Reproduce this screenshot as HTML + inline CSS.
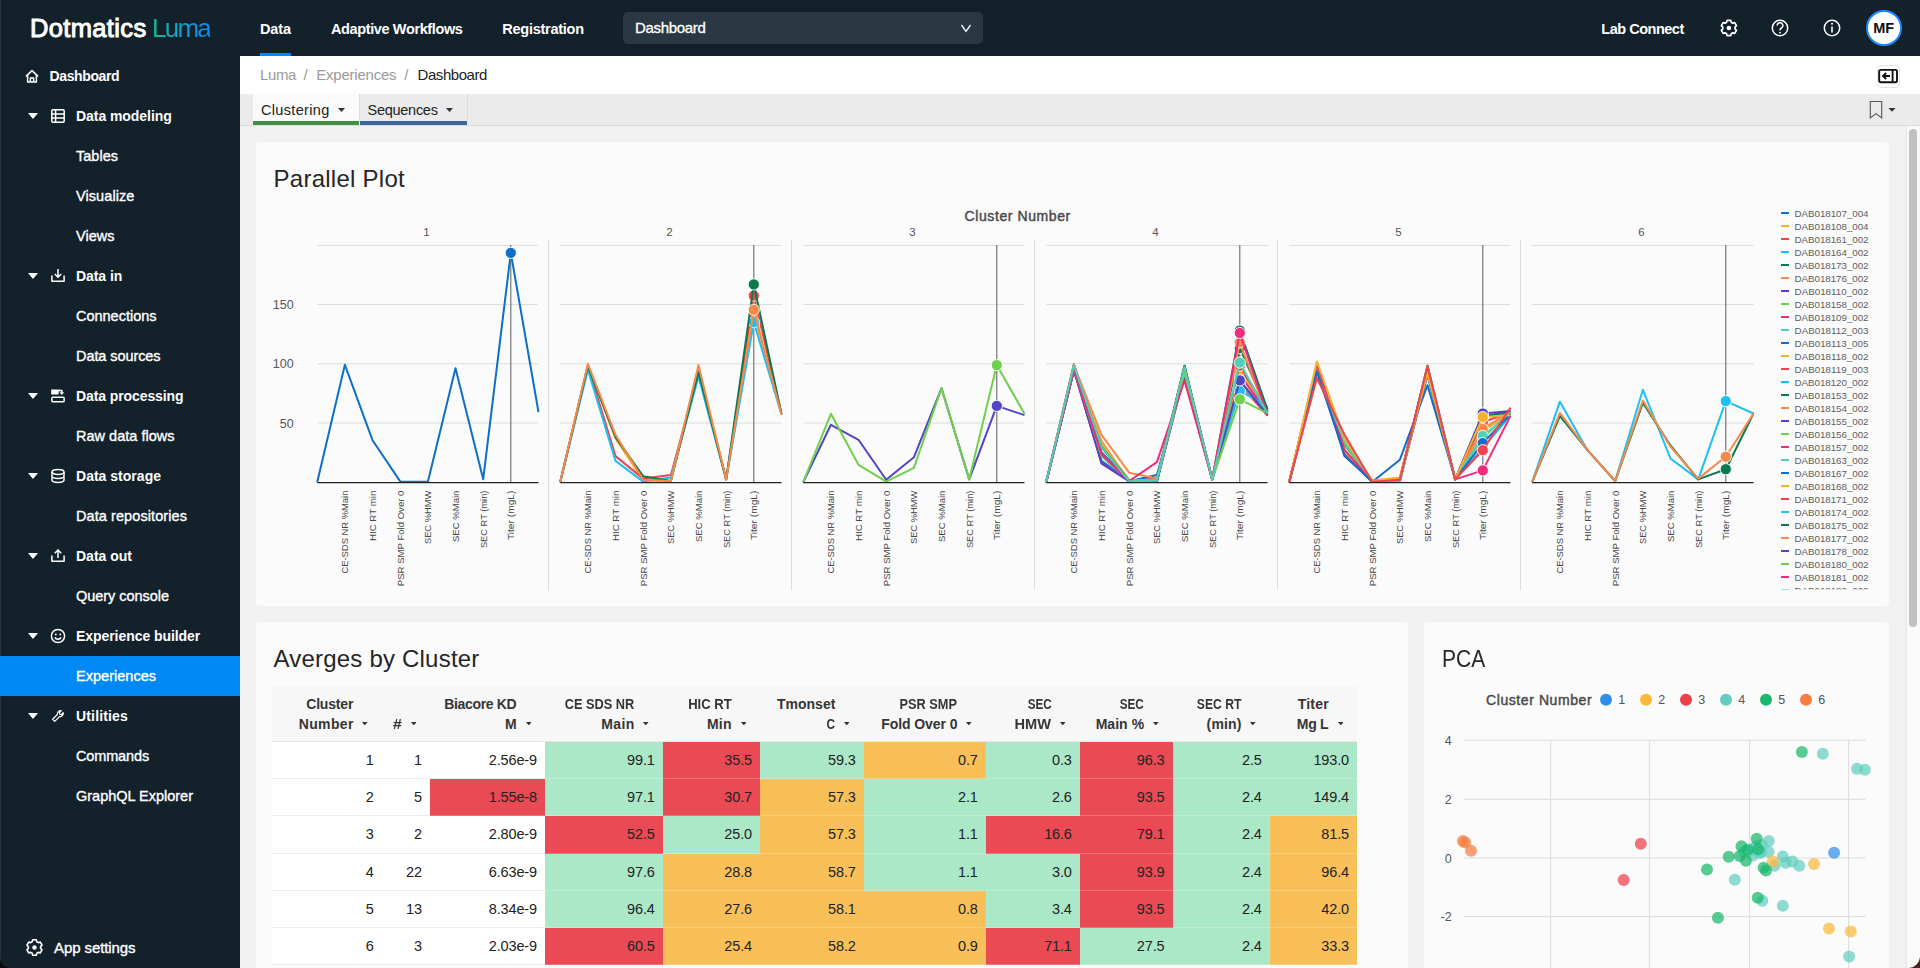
<!DOCTYPE html>
<html lang="en"><head><meta charset="utf-8"><title>Dotmatics Luma - Dashboard</title>
<style>
*{box-sizing:border-box;margin:0;padding:0}
html,body{width:1920px;height:968px;overflow:hidden}
body{background:#f1f1f1;font-family:"Liberation Sans",sans-serif;color:#222;position:relative}
.abs{position:absolute}
.t{position:absolute;white-space:nowrap;line-height:1}
#nav{position:absolute;left:0;top:0;width:1920px;height:56px;background:#13212b}
#side{position:absolute;left:0;top:56px;width:240px;height:912px;background:#13212b}
#side .it{position:absolute;left:0;width:240px;height:40px;color:#fff}
#side .it .lb{position:absolute;left:76px;top:0;line-height:40px;white-space:nowrap}
#side .g .lb{font-weight:bold;font-size:14px}
#side .s .lb{font-size:14.5px;-webkit-text-stroke:0.35px #fff}
#side svg{position:absolute;overflow:visible}
.card{position:absolute;background:#fbfbfb;border-radius:4px}
svg text{font-family:"Liberation Sans",sans-serif}
</style></head><body>

<div id="nav">
<span class="t" style="left:30px;top:13.6px;font-size:25.5px;color:#fff;-webkit-text-stroke:1px #fff;letter-spacing:0.349px;line-height:28px">Dotmatics</span>
<span class="t" style="left:152px;top:13px;font-size:26px;color:#1aa0e8;letter-spacing:-1.76px;line-height:30px;background:linear-gradient(90deg,#18b98c 0%,#10a4c8 45%,#1288f0 100%);-webkit-background-clip:text;background-clip:text;-webkit-text-fill-color:transparent">Luma</span>
<span class="t" style="left:260px;top:14.6px;font-size:14.5px;font-weight:bold;color:#fff;letter-spacing:-0.107px;line-height:28px">Data</span>
<span class="t" style="left:331px;top:14.6px;font-size:14.5px;font-weight:bold;color:#fff;letter-spacing:-0.378px;line-height:28px">Adaptive Workflows</span>
<span class="t" style="left:502.3px;top:14.6px;font-size:14.5px;font-weight:bold;color:#fff;letter-spacing:-0.258px;line-height:28px">Registration</span>
<div class="abs" style="left:260px;top:53px;width:31px;height:4px;background:#0a84ff"></div>
<div class="abs" style="left:623px;top:12px;width:360px;height:32px;background:#2a3843;border-radius:5px"></div>
<span class="t" style="left:635px;top:14.4px;font-size:15px;color:#fff;-webkit-text-stroke:0.3px #fff;letter-spacing:-0.32px;line-height:28px">Dashboard</span>
<svg class="abs" style="left:960px;top:23px" width="12" height="10" viewBox="0 0 12 10"><path d="M1.5 2 L6 8.3 L10.5 2" fill="none" stroke="#fff" stroke-width="1.3"/></svg>
<span class="t" style="left:1601.3px;top:14.6px;font-size:14.5px;font-weight:bold;color:#fff;letter-spacing:-0.483px;line-height:28px">Lab Connect</span>
<svg class="abs" style="left:1710px;top:10px" width="160" height="36" viewBox="0 0 160 36">
<path d="M16.59 12.29 L17.12 10.30 L20.68 10.30 L21.21 12.29 L22.69 13.14 L24.68 12.61 L26.45 15.69 L25.00 17.14 L25.00 18.86 L26.45 20.31 L24.68 23.39 L22.69 22.86 L21.21 23.71 L20.68 25.70 L17.12 25.70 L16.59 23.71 L15.11 22.86 L13.12 23.39 L11.35 20.31 L12.80 18.86 L12.80 17.14 L11.35 15.69 L13.12 12.61 L15.11 13.14Z" fill="none" stroke="#fff" stroke-width="1.7" stroke-linejoin="round"/><circle cx="18.9" cy="18" r="2.3" fill="#fff"/>
<circle cx="70" cy="18" r="7.7" fill="none" stroke="#fff" stroke-width="1.5"/>
<path d="M67.2 15.6 a2.8 2.8 0 1 1 4.2 2.4 c-1 .6 -1.4 1.1 -1.4 2.2" fill="none" stroke="#fff" stroke-width="1.5"/><circle cx="70" cy="22.6" r="0.95" fill="#fff"/>
<circle cx="122" cy="18" r="7.7" fill="none" stroke="#fff" stroke-width="1.5"/>
<path d="M122 16.6 V22.4" stroke="#fff" stroke-width="1.6" fill="none"/><circle cx="122" cy="13.8" r="1" fill="#fff"/>
</svg>
<div class="abs" style="left:1865.8px;top:10px;width:36px;height:36px;border-radius:50%;background:#fff;border:2.2px solid #1a8cff"></div>
<span class="t" style="left:1873.3px;top:20px;font-size:14.5px;font-weight:bold;color:#111;letter-spacing:-0.218px;line-height:16px">MF</span>
</div>
<div id="side">
<div class="abs" style="left:0;top:-56px;width:1px;height:968px;background:#23333f"></div>
<div class="it g" style="top:0px"><svg style="left:25px;top:13px" width="14" height="14" viewBox="0 0 14 14"><path d="M1 7.4 L7 1.6 L13 7.4 M2.6 6.2 V13 H11.4 V6.2 M5.4 13 V9 H8.6 V13" fill="none" stroke="#fff" stroke-width="1.5" stroke-linejoin="round" stroke-linecap="butt"/></svg><span class="lb" style="left:49.5px;letter-spacing:-0.369px">Dashboard</span></div>
<div class="it g" style="top:40px"><svg style="left:28px;top:17px" width="10" height="6" viewBox="0 0 10 6"><path d="M0 0 H10 L5 6Z" fill="#fff"/></svg><svg style="left:51px;top:13px" width="14" height="14" viewBox="0 0 14 14"><rect x="0.8" y="0.8" width="12.4" height="12.4" rx="1.2" fill="none" stroke="#fff" stroke-width="1.5" stroke-linejoin="round" stroke-linecap="butt"/><path d="M0.8 5 H13.2 M0.8 9 H13.2 M4.6 0.8 V13.2" fill="none" stroke="#fff" stroke-width="1.5" stroke-linejoin="round" stroke-linecap="butt"/></svg><span class="lb" style="letter-spacing:-0.058px">Data modeling</span></div>
<div class="it s" style="top:80px"><span class="lb" style="letter-spacing:0.014px">Tables</span></div>
<div class="it s" style="top:120px"><span class="lb" style="letter-spacing:0.081px">Visualize</span></div>
<div class="it s" style="top:160px"><span class="lb" style="letter-spacing:0.017px">Views</span></div>
<div class="it g" style="top:200px"><svg style="left:28px;top:17px" width="10" height="6" viewBox="0 0 10 6"><path d="M0 0 H10 L5 6Z" fill="#fff"/></svg><svg style="left:51px;top:13px" width="14" height="14" viewBox="0 0 14 14"><path d="M0.9 6.5 V12.3 H13.1 V6.5" fill="none" stroke="#fff" stroke-width="1.5" stroke-linejoin="round" stroke-linecap="butt"/><path d="M7 0 V8 M3.8 5 L7 8.3 L10.2 5" fill="none" stroke="#fff" stroke-width="1.5" stroke-linejoin="round" stroke-linecap="butt"/></svg><span class="lb" style="letter-spacing:-0.068px">Data in</span></div>
<div class="it s" style="top:240px"><span class="lb" style="letter-spacing:-0.01px">Connections</span></div>
<div class="it s" style="top:280px"><span class="lb" style="letter-spacing:-0.077px">Data sources</span></div>
<div class="it g" style="top:320px"><svg style="left:28px;top:17px" width="10" height="6" viewBox="0 0 10 6"><path d="M0 0 H10 L5 6Z" fill="#fff"/></svg><svg style="left:51px;top:13px" width="14" height="14" viewBox="0 0 14 14"><path d="M0.2 0.6 H9 V2.4 H7.6 V5.6 H0.2Z" fill="#fff"/><path d="M8.4 3.2 H13.2 L10.8 5.9Z" fill="#fff"/><path d="M9 1.5 H10.9 V3.4" fill="none" stroke="#fff" stroke-width="1.5" stroke-linejoin="round" stroke-linecap="butt"/><rect x="0.9" y="8.2" width="12.2" height="4.6" rx="0.8" fill="none" stroke="#fff" stroke-width="1.5" stroke-linejoin="round" stroke-linecap="butt"/></svg><span class="lb" style="letter-spacing:-0.095px">Data processing</span></div>
<div class="it s" style="top:360px"><span class="lb" style="letter-spacing:0.013px">Raw data flows</span></div>
<div class="it g" style="top:400px"><svg style="left:28px;top:17px" width="10" height="6" viewBox="0 0 10 6"><path d="M0 0 H10 L5 6Z" fill="#fff"/></svg><svg style="left:51px;top:13px" width="14" height="14" viewBox="0 0 14 14"><ellipse cx="7" cy="3" rx="6" ry="2.4" fill="none" stroke="#fff" stroke-width="1.5" stroke-linejoin="round" stroke-linecap="butt"/><path d="M1 3 V11 C1 14.2 13 14.2 13 11 V3 M1 7 C1 10.2 13 10.2 13 7" fill="none" stroke="#fff" stroke-width="1.5" stroke-linejoin="round" stroke-linecap="butt"/></svg><span class="lb" style="letter-spacing:0.016px">Data storage</span></div>
<div class="it s" style="top:440px"><span class="lb" style="letter-spacing:0.082px">Data repositories</span></div>
<div class="it g" style="top:480px"><svg style="left:28px;top:17px" width="10" height="6" viewBox="0 0 10 6"><path d="M0 0 H10 L5 6Z" fill="#fff"/></svg><svg style="left:51px;top:13px" width="14" height="14" viewBox="0 0 14 14"><path d="M0.9 6.5 V12.3 H13.1 V6.5" fill="none" stroke="#fff" stroke-width="1.5" stroke-linejoin="round" stroke-linecap="butt"/><path d="M7 9 V1 M3.8 4.2 L7 0.9 L10.2 4.2" fill="none" stroke="#fff" stroke-width="1.5" stroke-linejoin="round" stroke-linecap="butt"/></svg><span class="lb" style="letter-spacing:-0.0px">Data out</span></div>
<div class="it s" style="top:520px"><span class="lb" style="letter-spacing:-0.038px">Query console</span></div>
<div class="it g" style="top:560px"><svg style="left:28px;top:17px" width="10" height="6" viewBox="0 0 10 6"><path d="M0 0 H10 L5 6Z" fill="#fff"/></svg><svg style="left:51px;top:13px" width="14" height="14" viewBox="0 0 14 14"><circle cx="7" cy="7" r="6.6" fill="none" stroke="#fff" stroke-width="1.5" stroke-linejoin="round" stroke-linecap="butt"/><circle cx="4.8" cy="5.4" r="0.95" fill="#fff"/><circle cx="9.2" cy="5.4" r="0.95" fill="#fff"/><path d="M3.9 8.4 C5 11 9 11 10.1 8.4" fill="none" stroke="#fff" stroke-width="1.5" stroke-linejoin="round" stroke-linecap="butt"/></svg><span class="lb" style="letter-spacing:-0.059px">Experience builder</span></div>
<div class="it s" style="top:600px;background:#0088f5"><span class="lb" style="letter-spacing:0.019px">Experiences</span></div>
<div class="it g" style="top:640px"><svg style="left:28px;top:17px" width="10" height="6" viewBox="0 0 10 6"><path d="M0 0 H10 L5 6Z" fill="#fff"/></svg><svg style="left:51px;top:13px" width="14" height="14" viewBox="0 0 14 14"><g transform="translate(7 7) scale(0.9) translate(-7 -7)"><path d="M1 10.6 L6.3 5.3 A3.6 3.6 0 0 1 10.6 1.2 L8.4 3.4 L9 5 L10.6 5.6 L12.8 3.4 A3.6 3.6 0 0 1 8.7 7.7 L3.4 13 Z" fill="none" stroke="#fff" stroke-width="1.4" stroke-linejoin="round"/></g></svg><span class="lb" style="letter-spacing:0.159px">Utilities</span></div>
<div class="it s" style="top:680px"><span class="lb" style="letter-spacing:-0.142px">Commands</span></div>
<div class="it s" style="top:720px"><span class="lb" style="letter-spacing:-0.008px">GraphQL Explorer</span></div>
<div class="it s" style="top:872px"><svg style="left:24.7px;top:10.1px" width="19" height="19" viewBox="0 0 19 19"><path d="M7.19 3.79 L7.72 1.80 L11.28 1.80 L11.81 3.79 L13.29 4.64 L15.28 4.11 L17.05 7.19 L15.60 8.64 L15.60 10.36 L17.05 11.81 L15.28 14.89 L13.29 14.36 L11.81 15.21 L11.28 17.20 L7.72 17.20 L7.19 15.21 L5.71 14.36 L3.72 14.89 L1.95 11.81 L3.40 10.36 L3.40 8.64 L1.95 7.19 L3.72 4.11 L5.71 4.64Z" fill="none" stroke="#fff" stroke-width="1.6" stroke-linejoin="round"/><circle cx="9.5" cy="9.5" r="2.2" fill="#fff"/></svg><span class="lb" style="left:54px;font-size:15px;letter-spacing:-0.088px">App settings</span></div>
<svg class="abs" style="left:0;top:902px" width="10" height="10" viewBox="0 0 10 10"><path d="M0 0 V10 H10 A10 10 0 0 1 0 0Z" fill="#0a0a0a"/></svg>
</div>
<div class="abs" style="left:240px;top:56px;width:1680px;height:38px;background:#fff"></div>
<span class="t" style="left:260px;top:66px;font-size:15px;color:#9a9a9a;letter-spacing:-0.381px;line-height:18px">Luma</span>
<span class="t" style="left:303.5px;top:66px;font-size:15px;color:#9a9a9a;letter-spacing:0.333px;line-height:18px">/</span>
<span class="t" style="left:316.3px;top:66px;font-size:15px;color:#9a9a9a;letter-spacing:-0.231px;line-height:18px">Experiences</span>
<span class="t" style="left:404.3px;top:66px;font-size:15px;color:#9a9a9a;letter-spacing:0.333px;line-height:18px">/</span>
<span class="t" style="left:417.5px;top:66px;font-size:15px;color:#222;letter-spacing:-0.431px;line-height:18px">Dashboard</span>
<div class="abs" style="left:1876.5px;top:64.5px;width:23px;height:23px;border:1px solid #e4e4e4;border-radius:4px;background:#fff"></div>
<svg class="abs" style="left:1877px;top:67px" width="22" height="18" viewBox="0 0 22 18"><rect x="2.2" y="2.9" width="17.8" height="12.3" rx="1.6" fill="none" stroke="#111" stroke-width="1.9"/><path d="M15.6 3 V15" stroke="#111" stroke-width="1.9"/><path d="M13 9 H6.4 M9.2 5.8 L6 9 L9.2 12.2" fill="none" stroke="#111" stroke-width="1.9"/></svg>
<div class="abs" style="left:240px;top:94px;width:1680px;height:32px;background:#ebebeb;border-bottom:1px solid #dedede"></div>
<div class="abs" style="left:253px;top:94px;width:106px;height:31px;background:#fafafa;border-bottom:4px solid #3f9142"></div>
<div class="abs" style="left:359px;top:94px;width:1px;height:27px;background:#dcdcdc"></div>
<div class="abs" style="left:360px;top:94px;width:107px;height:31px;border-bottom:4px solid #38699a"></div>
<div class="abs" style="left:467px;top:94px;width:1px;height:27px;background:#dcdcdc"></div>
<span class="t" style="left:261px;top:100.8px;font-size:14.5px;color:#222;letter-spacing:0.332px;line-height:18px">Clustering</span>
<span class="t" style="left:367.6px;top:100.8px;font-size:14.5px;color:#222;letter-spacing:-0.284px;line-height:18px">Sequences</span>
<svg class="abs" style="left:338px;top:108px" width="7" height="4" viewBox="0 0 7 4"><path d="M0 0 H7 L3.5 4Z" fill="#333"/></svg>
<svg class="abs" style="left:445.8px;top:108px" width="7" height="4" viewBox="0 0 7 4"><path d="M0 0 H7 L3.5 4Z" fill="#333"/></svg>
<svg class="abs" style="left:1868px;top:99px" width="30" height="22" viewBox="0 0 30 22"><path d="M2.3 2.5 H13.7 V19 L8 14.6 L2.3 19Z" fill="none" stroke="#555" stroke-width="1.1"/><path d="M20.4 9 H27.6 L24 12.8Z" fill="#333"/></svg>
<div class="abs" style="left:1905.5px;top:126px;width:14.5px;height:842px;background:#fafafa;border-left:1px solid #e6e6e6"></div>
<div class="abs" style="left:1909.3px;top:129px;width:7.7px;height:498px;background:#c1c1c1;border-radius:4px"></div>
<div class="card" style="left:256px;top:142px;width:1633px;height:464px"></div>
<span class="t" style="left:273.5px;top:163.6px;font-size:24px;color:#262626;letter-spacing:0.264px;line-height:30px">Parallel Plot</span>
<svg class="abs" style="left:0;top:0" width="1920" height="968" viewBox="0 0 1920 968">
<defs><clipPath id="lg"><rect x="1776" y="205" width="110" height="384.5"/></clipPath></defs>
<text x="1017.7" y="220.8" font-size="14" fill="#4a4a4a" stroke="#4a4a4a" stroke-width="0.45" text-anchor="middle" letter-spacing="0.584">Cluster Number</text>
<text x="293.6" y="427.5" font-size="12.5" fill="#555" text-anchor="end">50</text>
<text x="293.6" y="368.3" font-size="12.5" fill="#555" text-anchor="end">100</text>
<text x="293.6" y="309.1" font-size="12.5" fill="#555" text-anchor="end">150</text>
<path d="M317.2 423.0 H538.5" stroke="#dcdcdc" stroke-width="1"/>
<path d="M317.2 363.8 H538.5" stroke="#dcdcdc" stroke-width="1"/>
<path d="M317.2 304.6 H538.5" stroke="#dcdcdc" stroke-width="1"/>
<path d="M317.2 245.4 H538.5" stroke="#dcdcdc" stroke-width="1"/>
<path d="M548.5 239.7 V589.8" stroke="#dcdcdc" stroke-width="1"/>
<text x="426.5" y="235.9" font-size="11.5" fill="#555" text-anchor="middle">1</text>
<path d="M510.8 245 V482" stroke="#6a6a6a" stroke-width="1.1"/>
<polyline points="317.2,482.2 344.9,364.8 372.5,440.2 400.2,481.4 427.9,481.8 455.5,368.2 483.2,479.2 510.8,252.9 538.5,412.0" fill="none" stroke="#0f6fc6" stroke-width="2" stroke-linejoin="round"/>
<circle cx="510.8" cy="252.9" r="5.6" fill="#0f6fc6" stroke="#fff" stroke-width="0.9"/>
<path d="M317.2 482.6 H538.5" stroke="#222" stroke-width="1.3"/>
<text transform="translate(348.3 573.6) rotate(-90)" font-size="9.7" fill="#484848" textLength="83" lengthAdjust="spacingAndGlyphs">CE-SDS NR %Main</text>
<text transform="translate(375.9 541.1) rotate(-90)" font-size="9.7" fill="#484848" textLength="50.5" lengthAdjust="spacingAndGlyphs">HIC RT min</text>
<text transform="translate(403.6 586.2) rotate(-90)" font-size="9.7" fill="#484848" textLength="95.6" lengthAdjust="spacingAndGlyphs">PSR SMP Fold Over 0</text>
<text transform="translate(431.2 544.1) rotate(-90)" font-size="9.7" fill="#484848" textLength="53.5" lengthAdjust="spacingAndGlyphs">SEC %HMW</text>
<text transform="translate(458.9 542.1) rotate(-90)" font-size="9.7" fill="#484848" textLength="51.5" lengthAdjust="spacingAndGlyphs">SEC %Main</text>
<text transform="translate(486.6 548.1) rotate(-90)" font-size="9.7" fill="#484848" textLength="57.5" lengthAdjust="spacingAndGlyphs">SEC RT (min)</text>
<text transform="translate(514.2 540.1) rotate(-90)" font-size="9.7" fill="#484848" textLength="49.5" lengthAdjust="spacingAndGlyphs">Titer (mgL)</text>
<path d="M560.2 423.0 H781.5" stroke="#dcdcdc" stroke-width="1"/>
<path d="M560.2 363.8 H781.5" stroke="#dcdcdc" stroke-width="1"/>
<path d="M560.2 304.6 H781.5" stroke="#dcdcdc" stroke-width="1"/>
<path d="M560.2 245.4 H781.5" stroke="#dcdcdc" stroke-width="1"/>
<path d="M791.5 239.7 V589.8" stroke="#dcdcdc" stroke-width="1"/>
<text x="669.5" y="235.9" font-size="11.5" fill="#555" text-anchor="middle">2</text>
<path d="M753.8 245 V482" stroke="#6a6a6a" stroke-width="1.1"/>
<polyline points="560.2,482.2 587.9,365.0 615.5,438.4 643.2,480.4 670.9,481.0 698.5,367.3 726.2,479.4 753.8,315.2 781.5,414.1" fill="none" stroke="#f6b02c" stroke-width="2" stroke-linejoin="round"/>
<circle cx="753.8" cy="315.2" r="5.6" fill="#f6b02c" stroke="#fff" stroke-width="0.9"/>
<polyline points="560.2,482.2 587.9,365.6 615.5,456.1 643.2,478.6 670.9,475.1 698.5,373.3 726.2,479.4 753.8,295.6 781.5,413.8" fill="none" stroke="#f0434e" stroke-width="2" stroke-linejoin="round"/>
<circle cx="753.8" cy="295.6" r="5.6" fill="#f0434e" stroke="#fff" stroke-width="0.9"/>
<polyline points="560.2,482.2 587.9,369.7 615.5,460.9 643.2,481.6 670.9,477.5 698.5,376.8 726.2,479.4 753.8,322.3 781.5,414.5" fill="none" stroke="#1cc0f2" stroke-width="2" stroke-linejoin="round"/>
<circle cx="753.8" cy="322.3" r="5.6" fill="#1cc0f2" stroke="#fff" stroke-width="0.9"/>
<polyline points="560.2,482.2 587.9,366.1 615.5,437.2 643.2,476.3 670.9,481.0 698.5,372.1 726.2,479.4 753.8,284.4 781.5,414.1" fill="none" stroke="#0b7a4f" stroke-width="2" stroke-linejoin="round"/>
<circle cx="753.8" cy="284.4" r="5.6" fill="#0b7a4f" stroke="#fff" stroke-width="0.9"/>
<polyline points="560.2,482.2 587.9,363.8 615.5,434.8 643.2,479.8 670.9,481.0 698.5,365.0 726.2,479.4 753.8,309.8 781.5,414.7" fill="none" stroke="#f78a4b" stroke-width="2" stroke-linejoin="round"/>
<circle cx="753.8" cy="309.8" r="5.6" fill="#f78a4b" stroke="#fff" stroke-width="0.9"/>
<path d="M560.2 482.6 H781.5" stroke="#222" stroke-width="1.3"/>
<text transform="translate(591.3 573.6) rotate(-90)" font-size="9.7" fill="#484848" textLength="83" lengthAdjust="spacingAndGlyphs">CE-SDS NR %Main</text>
<text transform="translate(618.9 541.1) rotate(-90)" font-size="9.7" fill="#484848" textLength="50.5" lengthAdjust="spacingAndGlyphs">HIC RT min</text>
<text transform="translate(646.6 586.2) rotate(-90)" font-size="9.7" fill="#484848" textLength="95.6" lengthAdjust="spacingAndGlyphs">PSR SMP Fold Over 0</text>
<text transform="translate(674.2 544.1) rotate(-90)" font-size="9.7" fill="#484848" textLength="53.5" lengthAdjust="spacingAndGlyphs">SEC %HMW</text>
<text transform="translate(701.9 542.1) rotate(-90)" font-size="9.7" fill="#484848" textLength="51.5" lengthAdjust="spacingAndGlyphs">SEC %Main</text>
<text transform="translate(729.6 548.1) rotate(-90)" font-size="9.7" fill="#484848" textLength="57.5" lengthAdjust="spacingAndGlyphs">SEC RT (min)</text>
<text transform="translate(757.2 540.1) rotate(-90)" font-size="9.7" fill="#484848" textLength="49.5" lengthAdjust="spacingAndGlyphs">Titer (mgL)</text>
<path d="M803.2 423.0 H1024.5" stroke="#dcdcdc" stroke-width="1"/>
<path d="M803.2 363.8 H1024.5" stroke="#dcdcdc" stroke-width="1"/>
<path d="M803.2 304.6 H1024.5" stroke="#dcdcdc" stroke-width="1"/>
<path d="M803.2 245.4 H1024.5" stroke="#dcdcdc" stroke-width="1"/>
<path d="M1034.5 239.7 V589.8" stroke="#dcdcdc" stroke-width="1"/>
<text x="912.5" y="235.9" font-size="11.5" fill="#555" text-anchor="middle">3</text>
<path d="M996.8 245 V482" stroke="#6a6a6a" stroke-width="1.1"/>
<polyline points="803.2,482.2 830.9,424.8 858.5,439.8 886.2,479.8 913.9,457.3 941.5,388.2 969.2,479.4 996.8,405.9 1024.5,415.1" fill="none" stroke="#5145c5" stroke-width="2" stroke-linejoin="round"/>
<circle cx="996.8" cy="405.9" r="5.6" fill="#5145c5" stroke="#fff" stroke-width="0.9"/>
<polyline points="803.2,482.2 830.9,413.8 858.5,464.8 886.2,481.6 913.9,467.8 941.5,388.2 969.2,479.4 996.8,365.1 1024.5,413.8" fill="none" stroke="#6fd04a" stroke-width="2" stroke-linejoin="round"/>
<circle cx="996.8" cy="365.1" r="5.6" fill="#6fd04a" stroke="#fff" stroke-width="0.9"/>
<path d="M803.2 482.6 H1024.5" stroke="#222" stroke-width="1.3"/>
<text transform="translate(834.3 573.6) rotate(-90)" font-size="9.7" fill="#484848" textLength="83" lengthAdjust="spacingAndGlyphs">CE-SDS NR %Main</text>
<text transform="translate(861.9 541.1) rotate(-90)" font-size="9.7" fill="#484848" textLength="50.5" lengthAdjust="spacingAndGlyphs">HIC RT min</text>
<text transform="translate(889.6 586.2) rotate(-90)" font-size="9.7" fill="#484848" textLength="95.6" lengthAdjust="spacingAndGlyphs">PSR SMP Fold Over 0</text>
<text transform="translate(917.2 544.1) rotate(-90)" font-size="9.7" fill="#484848" textLength="53.5" lengthAdjust="spacingAndGlyphs">SEC %HMW</text>
<text transform="translate(944.9 542.1) rotate(-90)" font-size="9.7" fill="#484848" textLength="51.5" lengthAdjust="spacingAndGlyphs">SEC %Main</text>
<text transform="translate(972.6 548.1) rotate(-90)" font-size="9.7" fill="#484848" textLength="57.5" lengthAdjust="spacingAndGlyphs">SEC RT (min)</text>
<text transform="translate(1000.2 540.1) rotate(-90)" font-size="9.7" fill="#484848" textLength="49.5" lengthAdjust="spacingAndGlyphs">Titer (mgL)</text>
<path d="M1046.2 423.0 H1267.5" stroke="#dcdcdc" stroke-width="1"/>
<path d="M1046.2 363.8 H1267.5" stroke="#dcdcdc" stroke-width="1"/>
<path d="M1046.2 304.6 H1267.5" stroke="#dcdcdc" stroke-width="1"/>
<path d="M1046.2 245.4 H1267.5" stroke="#dcdcdc" stroke-width="1"/>
<path d="M1277.5 239.7 V589.8" stroke="#dcdcdc" stroke-width="1"/>
<text x="1155.5" y="235.9" font-size="11.5" fill="#555" text-anchor="middle">4</text>
<path d="M1239.8 245 V482" stroke="#6a6a6a" stroke-width="1.1"/>
<polyline points="1046.2,482.2 1073.9,368.6 1101.5,453.8 1129.2,480.7 1156.9,481.4 1184.5,369.4 1212.2,479.4 1239.8,371.0 1267.5,415.5" fill="none" stroke="#f02b7d" stroke-width="2" stroke-linejoin="round"/>
<circle cx="1239.8" cy="371.0" r="5.6" fill="#f02b7d" stroke="#fff" stroke-width="0.9"/>
<polyline points="1046.2,482.2 1073.9,367.3 1101.5,455.6 1129.2,481.2 1156.9,481.4 1184.5,373.6 1212.2,479.4 1239.8,368.4 1267.5,410.0" fill="none" stroke="#4fd0b8" stroke-width="2" stroke-linejoin="round"/>
<circle cx="1239.8" cy="368.4" r="5.6" fill="#4fd0b8" stroke="#fff" stroke-width="0.9"/>
<polyline points="1046.2,482.2 1073.9,370.0 1101.5,460.9 1129.2,480.7 1156.9,478.8 1184.5,369.0 1212.2,479.4 1239.8,369.6 1267.5,408.9" fill="none" stroke="#0f6fc6" stroke-width="2" stroke-linejoin="round"/>
<circle cx="1239.8" cy="369.6" r="5.6" fill="#0f6fc6" stroke="#fff" stroke-width="0.9"/>
<polyline points="1046.2,482.2 1073.9,370.6 1101.5,442.9 1129.2,481.5 1156.9,481.2 1184.5,373.3 1212.2,479.4 1239.8,373.6 1267.5,410.1" fill="none" stroke="#f6b02c" stroke-width="2" stroke-linejoin="round"/>
<circle cx="1239.8" cy="373.6" r="5.6" fill="#f6b02c" stroke="#fff" stroke-width="0.9"/>
<polyline points="1046.2,482.2 1073.9,369.6 1101.5,447.2 1129.2,480.7 1156.9,480.5 1184.5,369.2 1212.2,479.4 1239.8,384.6 1267.5,415.5" fill="none" stroke="#f0434e" stroke-width="2" stroke-linejoin="round"/>
<circle cx="1239.8" cy="384.6" r="5.6" fill="#f0434e" stroke="#fff" stroke-width="0.9"/>
<polyline points="1046.2,482.2 1073.9,369.4 1101.5,445.7 1129.2,481.2 1156.9,480.7 1184.5,368.9 1212.2,479.4 1239.8,367.1 1267.5,413.8" fill="none" stroke="#1cc0f2" stroke-width="2" stroke-linejoin="round"/>
<circle cx="1239.8" cy="367.1" r="5.6" fill="#1cc0f2" stroke="#fff" stroke-width="0.9"/>
<polyline points="1046.2,482.2 1073.9,365.2 1101.5,445.4 1129.2,481.6 1156.9,479.9 1184.5,369.5 1212.2,479.4 1239.8,348.1 1267.5,410.7" fill="none" stroke="#0b7a4f" stroke-width="2" stroke-linejoin="round"/>
<circle cx="1239.8" cy="348.1" r="5.6" fill="#0b7a4f" stroke="#fff" stroke-width="0.9"/>
<polyline points="1046.2,482.2 1073.9,368.8 1101.5,441.1 1129.2,481.9 1156.9,480.4 1184.5,367.3 1212.2,479.4 1239.8,380.6 1267.5,412.4" fill="none" stroke="#f78a4b" stroke-width="2" stroke-linejoin="round"/>
<circle cx="1239.8" cy="380.6" r="5.6" fill="#f78a4b" stroke="#fff" stroke-width="0.9"/>
<polyline points="1046.2,482.2 1073.9,370.6 1101.5,445.9 1129.2,480.4 1156.9,479.9 1184.5,366.1 1212.2,479.4 1239.8,373.3 1267.5,410.9" fill="none" stroke="#5145c5" stroke-width="2" stroke-linejoin="round"/>
<circle cx="1239.8" cy="373.3" r="5.6" fill="#5145c5" stroke="#fff" stroke-width="0.9"/>
<polyline points="1046.2,482.2 1073.9,366.7 1101.5,447.2 1129.2,481.1 1156.9,479.1 1184.5,365.5 1212.2,479.4 1239.8,366.1 1267.5,411.2" fill="none" stroke="#6fd04a" stroke-width="2" stroke-linejoin="round"/>
<circle cx="1239.8" cy="366.1" r="5.6" fill="#6fd04a" stroke="#fff" stroke-width="0.9"/>
<polyline points="1046.2,482.2 1073.9,370.5 1101.5,463.3 1129.2,480.7 1156.9,478.7 1184.5,366.7 1212.2,479.4 1239.8,374.7 1267.5,413.1" fill="none" stroke="#f02b7d" stroke-width="2" stroke-linejoin="round"/>
<circle cx="1239.8" cy="374.7" r="5.6" fill="#f02b7d" stroke="#fff" stroke-width="0.9"/>
<polyline points="1046.2,482.2 1073.9,366.1 1101.5,455.8 1129.2,481.1 1156.9,481.1 1184.5,373.3 1212.2,479.4 1239.8,384.8 1267.5,410.4" fill="none" stroke="#4fd0b8" stroke-width="2" stroke-linejoin="round"/>
<circle cx="1239.8" cy="384.8" r="5.6" fill="#4fd0b8" stroke="#fff" stroke-width="0.9"/>
<polyline points="1046.2,482.2 1073.9,370.0 1101.5,452.3 1129.2,481.3 1156.9,475.1 1184.5,375.6 1212.2,479.4 1239.8,367.3 1267.5,412.0" fill="none" stroke="#0f6fc6" stroke-width="2" stroke-linejoin="round"/>
<circle cx="1239.8" cy="367.3" r="5.6" fill="#0f6fc6" stroke="#fff" stroke-width="0.9"/>
<polyline points="1046.2,482.2 1073.9,364.6 1101.5,443.5 1129.2,480.2 1156.9,480.8 1184.5,370.5 1212.2,479.4 1239.8,371.3 1267.5,409.6" fill="none" stroke="#f6b02c" stroke-width="2" stroke-linejoin="round"/>
<circle cx="1239.8" cy="371.3" r="5.6" fill="#f6b02c" stroke="#fff" stroke-width="0.9"/>
<polyline points="1046.2,482.2 1073.9,364.1 1101.5,453.8 1129.2,481.8 1156.9,480.9 1184.5,372.2 1212.2,479.4 1239.8,365.6 1267.5,411.7" fill="none" stroke="#f0434e" stroke-width="2" stroke-linejoin="round"/>
<circle cx="1239.8" cy="365.6" r="5.6" fill="#f0434e" stroke="#fff" stroke-width="0.9"/>
<polyline points="1046.2,482.2 1073.9,369.0 1101.5,456.1 1129.2,481.2 1156.9,480.5 1184.5,369.1 1212.2,479.4 1239.8,391.0 1267.5,406.4" fill="none" stroke="#1cc0f2" stroke-width="2" stroke-linejoin="round"/>
<circle cx="1239.8" cy="391.0" r="5.6" fill="#1cc0f2" stroke="#fff" stroke-width="0.9"/>
<polyline points="1046.2,482.2 1073.9,367.2 1101.5,446.6 1129.2,480.6 1156.9,481.4 1184.5,365.9 1212.2,479.4 1239.8,330.6 1267.5,409.7" fill="none" stroke="#0b7a4f" stroke-width="2" stroke-linejoin="round"/>
<circle cx="1239.8" cy="330.6" r="5.6" fill="#0b7a4f" stroke="#fff" stroke-width="0.9"/>
<polyline points="1046.2,482.2 1073.9,365.2 1101.5,434.8 1129.2,472.7 1156.9,478.6 1184.5,368.4 1212.2,479.4 1239.8,342.5 1267.5,415.4" fill="none" stroke="#f78a4b" stroke-width="2" stroke-linejoin="round"/>
<circle cx="1239.8" cy="342.5" r="5.6" fill="#f78a4b" stroke="#fff" stroke-width="0.9"/>
<polyline points="1046.2,482.2 1073.9,369.4 1101.5,463.3 1129.2,481.4 1156.9,481.5 1184.5,374.4 1212.2,479.4 1239.8,380.4 1267.5,415.2" fill="none" stroke="#5145c5" stroke-width="2" stroke-linejoin="round"/>
<circle cx="1239.8" cy="380.4" r="5.6" fill="#5145c5" stroke="#fff" stroke-width="0.9"/>
<polyline points="1046.2,482.2 1073.9,368.3 1101.5,455.8 1129.2,480.1 1156.9,479.8 1184.5,373.0 1212.2,479.4 1239.8,399.3 1267.5,413.4" fill="none" stroke="#6fd04a" stroke-width="2" stroke-linejoin="round"/>
<circle cx="1239.8" cy="399.3" r="5.6" fill="#6fd04a" stroke="#fff" stroke-width="0.9"/>
<polyline points="1046.2,482.2 1073.9,368.3 1101.5,454.3 1129.2,481.0 1156.9,462.1 1184.5,380.4 1212.2,479.4 1239.8,333.0 1267.5,415.3" fill="none" stroke="#f02b7d" stroke-width="2" stroke-linejoin="round"/>
<circle cx="1239.8" cy="333.0" r="5.6" fill="#f02b7d" stroke="#fff" stroke-width="0.9"/>
<polyline points="1046.2,482.2 1073.9,365.0 1101.5,446.7 1129.2,481.5 1156.9,480.8 1184.5,367.3 1212.2,479.4 1239.8,362.6 1267.5,413.5" fill="none" stroke="#4fd0b8" stroke-width="2" stroke-linejoin="round"/>
<circle cx="1239.8" cy="362.6" r="5.6" fill="#4fd0b8" stroke="#fff" stroke-width="0.9"/>
<path d="M1046.2 482.6 H1267.5" stroke="#222" stroke-width="1.3"/>
<text transform="translate(1077.3 573.6) rotate(-90)" font-size="9.7" fill="#484848" textLength="83" lengthAdjust="spacingAndGlyphs">CE-SDS NR %Main</text>
<text transform="translate(1104.9 541.1) rotate(-90)" font-size="9.7" fill="#484848" textLength="50.5" lengthAdjust="spacingAndGlyphs">HIC RT min</text>
<text transform="translate(1132.6 586.2) rotate(-90)" font-size="9.7" fill="#484848" textLength="95.6" lengthAdjust="spacingAndGlyphs">PSR SMP Fold Over 0</text>
<text transform="translate(1160.3 544.1) rotate(-90)" font-size="9.7" fill="#484848" textLength="53.5" lengthAdjust="spacingAndGlyphs">SEC %HMW</text>
<text transform="translate(1187.9 542.1) rotate(-90)" font-size="9.7" fill="#484848" textLength="51.5" lengthAdjust="spacingAndGlyphs">SEC %Main</text>
<text transform="translate(1215.6 548.1) rotate(-90)" font-size="9.7" fill="#484848" textLength="57.5" lengthAdjust="spacingAndGlyphs">SEC RT (min)</text>
<text transform="translate(1243.2 540.1) rotate(-90)" font-size="9.7" fill="#484848" textLength="49.5" lengthAdjust="spacingAndGlyphs">Titer (mgL)</text>
<path d="M1289.2 423.0 H1510.5" stroke="#dcdcdc" stroke-width="1"/>
<path d="M1289.2 363.8 H1510.5" stroke="#dcdcdc" stroke-width="1"/>
<path d="M1289.2 304.6 H1510.5" stroke="#dcdcdc" stroke-width="1"/>
<path d="M1289.2 245.4 H1510.5" stroke="#dcdcdc" stroke-width="1"/>
<path d="M1520.5 239.7 V589.8" stroke="#dcdcdc" stroke-width="1"/>
<text x="1398.5" y="235.9" font-size="11.5" fill="#555" text-anchor="middle">5</text>
<path d="M1482.8 245 V482" stroke="#6a6a6a" stroke-width="1.1"/>
<polyline points="1289.2,482.2 1316.9,369.4 1344.5,453.7 1372.2,481.2 1399.9,481.5 1427.5,370.0 1455.2,479.4 1482.8,416.6 1510.5,412.0" fill="none" stroke="#0f6fc6" stroke-width="2" stroke-linejoin="round"/>
<circle cx="1482.8" cy="416.6" r="5.6" fill="#0f6fc6" stroke="#fff" stroke-width="0.9"/>
<polyline points="1289.2,482.2 1316.9,367.4 1344.5,451.8 1372.2,481.5 1399.9,481.0 1427.5,367.4 1455.2,479.4 1482.8,431.4 1510.5,412.5" fill="none" stroke="#f6b02c" stroke-width="2" stroke-linejoin="round"/>
<circle cx="1482.8" cy="431.4" r="5.6" fill="#f6b02c" stroke="#fff" stroke-width="0.9"/>
<polyline points="1289.2,482.2 1316.9,371.7 1344.5,452.4 1372.2,480.8 1399.9,478.1 1427.5,366.5 1455.2,479.4 1482.8,422.3 1510.5,412.2" fill="none" stroke="#f0434e" stroke-width="2" stroke-linejoin="round"/>
<circle cx="1482.8" cy="422.3" r="5.6" fill="#f0434e" stroke="#fff" stroke-width="0.9"/>
<polyline points="1289.2,482.2 1316.9,366.9 1344.5,452.4 1372.2,481.3 1399.9,480.3 1427.5,375.3 1455.2,479.4 1482.8,448.1 1510.5,415.4" fill="none" stroke="#1cc0f2" stroke-width="2" stroke-linejoin="round"/>
<circle cx="1482.8" cy="448.1" r="5.6" fill="#1cc0f2" stroke="#fff" stroke-width="0.9"/>
<polyline points="1289.2,482.2 1316.9,372.6 1344.5,444.7 1372.2,480.5 1399.9,480.0 1427.5,365.6 1455.2,479.4 1482.8,416.3 1510.5,411.4" fill="none" stroke="#0b7a4f" stroke-width="2" stroke-linejoin="round"/>
<circle cx="1482.8" cy="416.3" r="5.6" fill="#0b7a4f" stroke="#fff" stroke-width="0.9"/>
<polyline points="1289.2,482.2 1316.9,371.3 1344.5,452.5 1372.2,481.8 1399.9,480.9 1427.5,373.4 1455.2,479.4 1482.8,428.9 1510.5,411.7" fill="none" stroke="#f78a4b" stroke-width="2" stroke-linejoin="round"/>
<circle cx="1482.8" cy="428.9" r="5.6" fill="#f78a4b" stroke="#fff" stroke-width="0.9"/>
<polyline points="1289.2,482.2 1316.9,365.7 1344.5,456.1 1372.2,481.0 1399.9,478.8 1427.5,374.7 1455.2,479.4 1482.8,413.5 1510.5,411.1" fill="none" stroke="#5145c5" stroke-width="2" stroke-linejoin="round"/>
<circle cx="1482.8" cy="413.5" r="5.6" fill="#5145c5" stroke="#fff" stroke-width="0.9"/>
<polyline points="1289.2,482.2 1316.9,366.4 1344.5,443.7 1372.2,481.4 1399.9,481.0 1427.5,367.2 1455.2,479.4 1482.8,438.0 1510.5,412.3" fill="none" stroke="#6fd04a" stroke-width="2" stroke-linejoin="round"/>
<circle cx="1482.8" cy="438.0" r="5.6" fill="#6fd04a" stroke="#fff" stroke-width="0.9"/>
<polyline points="1289.2,482.2 1316.9,364.1 1344.5,449.6 1372.2,481.5 1399.9,478.2 1427.5,367.9 1455.2,479.4 1482.8,470.4 1510.5,415.9" fill="none" stroke="#f02b7d" stroke-width="2" stroke-linejoin="round"/>
<circle cx="1482.8" cy="470.4" r="5.6" fill="#f02b7d" stroke="#fff" stroke-width="0.9"/>
<polyline points="1289.2,482.2 1316.9,373.8 1344.5,441.1 1372.2,480.8 1399.9,481.1 1427.5,366.8 1455.2,479.4 1482.8,436.0 1510.5,413.2" fill="none" stroke="#4fd0b8" stroke-width="2" stroke-linejoin="round"/>
<circle cx="1482.8" cy="436.0" r="5.6" fill="#4fd0b8" stroke="#fff" stroke-width="0.9"/>
<polyline points="1289.2,482.2 1316.9,371.5 1344.5,455.0 1372.2,482.0 1399.9,459.7 1427.5,385.1 1455.2,479.4 1482.8,443.1 1510.5,414.0" fill="none" stroke="#0f6fc6" stroke-width="2" stroke-linejoin="round"/>
<circle cx="1482.8" cy="443.1" r="5.6" fill="#0f6fc6" stroke="#fff" stroke-width="0.9"/>
<polyline points="1289.2,482.2 1316.9,361.4 1344.5,438.4 1372.2,480.7 1399.9,477.5 1427.5,373.4 1455.2,479.4 1482.8,417.1 1510.5,415.3" fill="none" stroke="#f6b02c" stroke-width="2" stroke-linejoin="round"/>
<circle cx="1482.8" cy="417.1" r="5.6" fill="#f6b02c" stroke="#fff" stroke-width="0.9"/>
<polyline points="1289.2,482.2 1316.9,378.0 1344.5,434.8 1372.2,481.7 1399.9,480.1 1427.5,366.1 1455.2,479.4 1482.8,450.2 1510.5,407.6" fill="none" stroke="#f0434e" stroke-width="2" stroke-linejoin="round"/>
<circle cx="1482.8" cy="450.2" r="5.6" fill="#f0434e" stroke="#fff" stroke-width="0.9"/>
<path d="M1289.2 482.6 H1510.5" stroke="#222" stroke-width="1.3"/>
<text transform="translate(1320.3 573.6) rotate(-90)" font-size="9.7" fill="#484848" textLength="83" lengthAdjust="spacingAndGlyphs">CE-SDS NR %Main</text>
<text transform="translate(1347.9 541.1) rotate(-90)" font-size="9.7" fill="#484848" textLength="50.5" lengthAdjust="spacingAndGlyphs">HIC RT min</text>
<text transform="translate(1375.6 586.2) rotate(-90)" font-size="9.7" fill="#484848" textLength="95.6" lengthAdjust="spacingAndGlyphs">PSR SMP Fold Over 0</text>
<text transform="translate(1403.3 544.1) rotate(-90)" font-size="9.7" fill="#484848" textLength="53.5" lengthAdjust="spacingAndGlyphs">SEC %HMW</text>
<text transform="translate(1430.9 542.1) rotate(-90)" font-size="9.7" fill="#484848" textLength="51.5" lengthAdjust="spacingAndGlyphs">SEC %Main</text>
<text transform="translate(1458.6 548.1) rotate(-90)" font-size="9.7" fill="#484848" textLength="57.5" lengthAdjust="spacingAndGlyphs">SEC RT (min)</text>
<text transform="translate(1486.2 540.1) rotate(-90)" font-size="9.7" fill="#484848" textLength="49.5" lengthAdjust="spacingAndGlyphs">Titer (mgL)</text>
<path d="M1532.2 423.0 H1753.5" stroke="#dcdcdc" stroke-width="1"/>
<path d="M1532.2 363.8 H1753.5" stroke="#dcdcdc" stroke-width="1"/>
<path d="M1532.2 304.6 H1753.5" stroke="#dcdcdc" stroke-width="1"/>
<path d="M1532.2 245.4 H1753.5" stroke="#dcdcdc" stroke-width="1"/>
<text x="1641.5" y="235.9" font-size="11.5" fill="#555" text-anchor="middle">6</text>
<path d="M1725.8 245 V482" stroke="#6a6a6a" stroke-width="1.1"/>
<polyline points="1532.2,482.2 1559.9,401.7 1587.5,450.2 1615.2,481.1 1642.9,389.8 1670.5,458.5 1698.2,479.4 1725.8,401.1 1753.5,413.5" fill="none" stroke="#1cc0f2" stroke-width="2" stroke-linejoin="round"/>
<circle cx="1725.8" cy="401.1" r="5.6" fill="#1cc0f2" stroke="#fff" stroke-width="0.9"/>
<polyline points="1532.2,482.2 1559.9,415.9 1587.5,450.2 1615.2,481.0 1642.9,402.9 1670.5,445.5 1698.2,479.4 1725.8,469.2 1753.5,413.5" fill="none" stroke="#0b7a4f" stroke-width="2" stroke-linejoin="round"/>
<circle cx="1725.8" cy="469.2" r="5.6" fill="#0b7a4f" stroke="#fff" stroke-width="0.9"/>
<polyline points="1532.2,482.2 1559.9,412.9 1587.5,450.2 1615.2,481.0 1642.9,400.5 1670.5,446.7 1698.2,478.6 1725.8,456.7 1753.5,413.5" fill="none" stroke="#f78a4b" stroke-width="2" stroke-linejoin="round"/>
<circle cx="1725.8" cy="456.7" r="5.6" fill="#f78a4b" stroke="#fff" stroke-width="0.9"/>
<path d="M1532.2 482.6 H1753.5" stroke="#222" stroke-width="1.3"/>
<text transform="translate(1563.3 573.6) rotate(-90)" font-size="9.7" fill="#484848" textLength="83" lengthAdjust="spacingAndGlyphs">CE-SDS NR %Main</text>
<text transform="translate(1590.9 541.1) rotate(-90)" font-size="9.7" fill="#484848" textLength="50.5" lengthAdjust="spacingAndGlyphs">HIC RT min</text>
<text transform="translate(1618.6 586.2) rotate(-90)" font-size="9.7" fill="#484848" textLength="95.6" lengthAdjust="spacingAndGlyphs">PSR SMP Fold Over 0</text>
<text transform="translate(1646.3 544.1) rotate(-90)" font-size="9.7" fill="#484848" textLength="53.5" lengthAdjust="spacingAndGlyphs">SEC %HMW</text>
<text transform="translate(1673.9 542.1) rotate(-90)" font-size="9.7" fill="#484848" textLength="51.5" lengthAdjust="spacingAndGlyphs">SEC %Main</text>
<text transform="translate(1701.6 548.1) rotate(-90)" font-size="9.7" fill="#484848" textLength="57.5" lengthAdjust="spacingAndGlyphs">SEC RT (min)</text>
<text transform="translate(1729.2 540.1) rotate(-90)" font-size="9.7" fill="#484848" textLength="49.5" lengthAdjust="spacingAndGlyphs">Titer (mgL)</text>
<g clip-path="url(#lg)">
<path d="M1781 213 H1789" stroke="#0f6fc6" stroke-width="2"/><text x="1794.6" y="217.0" font-size="9.8" fill="#5e5e5e" letter-spacing="-0.06">DAB018107_004</text>
<path d="M1781 226 H1789" stroke="#f6b02c" stroke-width="2"/><text x="1794.6" y="230.0" font-size="9.8" fill="#5e5e5e" letter-spacing="-0.06">DAB018108_004</text>
<path d="M1781 239 H1789" stroke="#f0434e" stroke-width="2"/><text x="1794.6" y="243.0" font-size="9.8" fill="#5e5e5e" letter-spacing="-0.06">DAB018161_002</text>
<path d="M1781 252 H1789" stroke="#1cc0f2" stroke-width="2"/><text x="1794.6" y="256.0" font-size="9.8" fill="#5e5e5e" letter-spacing="-0.06">DAB018164_002</text>
<path d="M1781 265 H1789" stroke="#0b7a4f" stroke-width="2"/><text x="1794.6" y="269.0" font-size="9.8" fill="#5e5e5e" letter-spacing="-0.06">DAB018173_002</text>
<path d="M1781 278 H1789" stroke="#f78a4b" stroke-width="2"/><text x="1794.6" y="282.0" font-size="9.8" fill="#5e5e5e" letter-spacing="-0.06">DAB018176_002</text>
<path d="M1781 291 H1789" stroke="#5145c5" stroke-width="2"/><text x="1794.6" y="295.0" font-size="9.8" fill="#5e5e5e" letter-spacing="-0.003">DAB018110_002</text>
<path d="M1781 304 H1789" stroke="#6fd04a" stroke-width="2"/><text x="1794.6" y="308.0" font-size="9.8" fill="#5e5e5e" letter-spacing="-0.06">DAB018158_002</text>
<path d="M1781 317 H1789" stroke="#f02b7d" stroke-width="2"/><text x="1794.6" y="321.0" font-size="9.8" fill="#5e5e5e" letter-spacing="-0.06">DAB018109_002</text>
<path d="M1781 330 H1789" stroke="#4fd0b8" stroke-width="2"/><text x="1794.6" y="334.0" font-size="9.8" fill="#5e5e5e" letter-spacing="-0.003">DAB018112_003</text>
<path d="M1781 343 H1789" stroke="#0f6fc6" stroke-width="2"/><text x="1794.6" y="347.0" font-size="9.8" fill="#5e5e5e" letter-spacing="-0.003">DAB018113_005</text>
<path d="M1781 356 H1789" stroke="#f6b02c" stroke-width="2"/><text x="1794.6" y="360.0" font-size="9.8" fill="#5e5e5e" letter-spacing="-0.003">DAB018118_002</text>
<path d="M1781 369 H1789" stroke="#f0434e" stroke-width="2"/><text x="1794.6" y="373.0" font-size="9.8" fill="#5e5e5e" letter-spacing="-0.003">DAB018119_003</text>
<path d="M1781 382 H1789" stroke="#1cc0f2" stroke-width="2"/><text x="1794.6" y="386.0" font-size="9.8" fill="#5e5e5e" letter-spacing="-0.06">DAB018120_002</text>
<path d="M1781 395 H1789" stroke="#0b7a4f" stroke-width="2"/><text x="1794.6" y="399.0" font-size="9.8" fill="#5e5e5e" letter-spacing="-0.06">DAB018153_002</text>
<path d="M1781 408 H1789" stroke="#f78a4b" stroke-width="2"/><text x="1794.6" y="412.0" font-size="9.8" fill="#5e5e5e" letter-spacing="-0.06">DAB018154_002</text>
<path d="M1781 421 H1789" stroke="#5145c5" stroke-width="2"/><text x="1794.6" y="425.0" font-size="9.8" fill="#5e5e5e" letter-spacing="-0.06">DAB018155_002</text>
<path d="M1781 434 H1789" stroke="#6fd04a" stroke-width="2"/><text x="1794.6" y="438.0" font-size="9.8" fill="#5e5e5e" letter-spacing="-0.06">DAB018156_002</text>
<path d="M1781 447 H1789" stroke="#f02b7d" stroke-width="2"/><text x="1794.6" y="451.0" font-size="9.8" fill="#5e5e5e" letter-spacing="-0.06">DAB018157_002</text>
<path d="M1781 460 H1789" stroke="#4fd0b8" stroke-width="2"/><text x="1794.6" y="464.0" font-size="9.8" fill="#5e5e5e" letter-spacing="-0.06">DAB018163_002</text>
<path d="M1781 473 H1789" stroke="#0f6fc6" stroke-width="2"/><text x="1794.6" y="477.0" font-size="9.8" fill="#5e5e5e" letter-spacing="-0.06">DAB018167_002</text>
<path d="M1781 486 H1789" stroke="#f6b02c" stroke-width="2"/><text x="1794.6" y="490.0" font-size="9.8" fill="#5e5e5e" letter-spacing="-0.06">DAB018168_002</text>
<path d="M1781 499 H1789" stroke="#f0434e" stroke-width="2"/><text x="1794.6" y="503.0" font-size="9.8" fill="#5e5e5e" letter-spacing="-0.06">DAB018171_002</text>
<path d="M1781 512 H1789" stroke="#1cc0f2" stroke-width="2"/><text x="1794.6" y="516.0" font-size="9.8" fill="#5e5e5e" letter-spacing="-0.06">DAB018174_002</text>
<path d="M1781 525 H1789" stroke="#0b7a4f" stroke-width="2"/><text x="1794.6" y="529.0" font-size="9.8" fill="#5e5e5e" letter-spacing="-0.06">DAB018175_002</text>
<path d="M1781 538 H1789" stroke="#f78a4b" stroke-width="2"/><text x="1794.6" y="542.0" font-size="9.8" fill="#5e5e5e" letter-spacing="-0.06">DAB018177_002</text>
<path d="M1781 551 H1789" stroke="#5145c5" stroke-width="2"/><text x="1794.6" y="555.0" font-size="9.8" fill="#5e5e5e" letter-spacing="-0.06">DAB018178_002</text>
<path d="M1781 564 H1789" stroke="#6fd04a" stroke-width="2"/><text x="1794.6" y="568.0" font-size="9.8" fill="#5e5e5e" letter-spacing="-0.06">DAB018180_002</text>
<path d="M1781 577 H1789" stroke="#f02b7d" stroke-width="2"/><text x="1794.6" y="581.0" font-size="9.8" fill="#5e5e5e" letter-spacing="-0.06">DAB018181_002</text>
<path d="M1781 590 H1789" stroke="#4fd0b8" stroke-width="2"/><text x="1794.6" y="594.0" font-size="9.8" fill="#5e5e5e" letter-spacing="-0.06">DAB018182_002</text>
</g>
</svg>
<div class="card" style="left:256px;top:622px;width:1152px;height:360px"></div>
<span class="t" style="left:273.5px;top:643.6px;font-size:24px;color:#262626;letter-spacing:0.205px;line-height:30px">Averges by Cluster</span>
<div class="abs" style="left:272px;top:686px;width:1085.2px;height:56px;background:#f7f7f7;border-bottom:1px solid #e6e6e6"></div>
<span class="t" style="right:1566.6px;top:694px;font-size:14px;font-weight:bold;color:#353535;letter-spacing:-0.176px;margin-right:0.176px;line-height:20px">Cluster</span>
<span class="t" style="right:1566.6px;top:714px;font-size:14px;font-weight:bold;color:#353535;letter-spacing:0.351px;margin-right:-0.351px;line-height:20px">Number</span>
<svg class="abs" style="left:362.4px;top:721.6px" width="5.6" height="3.4" viewBox="0 0 5.6 3.4"><path d="M0 0 H5.6 L2.8 3.4Z" fill="#333"/></svg>
<span class="t" style="right:1518.4px;top:714px;font-size:14px;font-weight:bold;color:#353535;display:inline-block;transform:scaleX(1.1302);transform-origin:right center;line-height:20px">#</span>
<svg class="abs" style="left:410.6px;top:721.6px" width="5.6" height="3.4" viewBox="0 0 5.6 3.4"><path d="M0 0 H5.6 L2.8 3.4Z" fill="#333"/></svg>
<span class="t" style="right:1403.4px;top:694px;font-size:14px;font-weight:bold;color:#353535;letter-spacing:-0.347px;margin-right:0.347px;line-height:20px">Biacore KD</span>
<span class="t" style="right:1403.4px;top:714px;font-size:14px;font-weight:bold;color:#353535;letter-spacing:-0.362px;margin-right:0.362px;line-height:20px">M</span>
<svg class="abs" style="left:525.6px;top:721.6px" width="5.6" height="3.4" viewBox="0 0 5.6 3.4"><path d="M0 0 H5.6 L2.8 3.4Z" fill="#333"/></svg>
<span class="t" style="right:1285.6px;top:694px;font-size:14px;font-weight:bold;color:#353535;display:inline-block;transform:scaleX(0.9117);transform-origin:right center;line-height:20px">CE SDS NR</span>
<span class="t" style="right:1285.6px;top:714px;font-size:14px;font-weight:bold;color:#353535;letter-spacing:0.403px;margin-right:-0.403px;line-height:20px">Main</span>
<svg class="abs" style="left:643.4px;top:721.6px" width="5.6" height="3.4" viewBox="0 0 5.6 3.4"><path d="M0 0 H5.6 L2.8 3.4Z" fill="#333"/></svg>
<span class="t" style="right:1188.4px;top:694px;font-size:14px;font-weight:bold;color:#353535;display:inline-block;transform:scaleX(0.9322);transform-origin:right center;line-height:20px">HIC RT</span>
<span class="t" style="right:1188.4px;top:714px;font-size:14px;font-weight:bold;color:#353535;letter-spacing:0.299px;margin-right:-0.299px;line-height:20px">Min</span>
<svg class="abs" style="left:740.6px;top:721.6px" width="5.6" height="3.4" viewBox="0 0 5.6 3.4"><path d="M0 0 H5.6 L2.8 3.4Z" fill="#333"/></svg>
<span class="t" style="right:1084.6px;top:694px;font-size:14px;font-weight:bold;color:#353535;letter-spacing:0.023px;margin-right:-0.023px;line-height:20px">Tmonset</span>
<span class="t" style="right:1084.6px;top:714px;font-size:14px;font-weight:bold;color:#353535;display:inline-block;transform:scaleX(0.8407);transform-origin:right center;line-height:20px">C</span>
<svg class="abs" style="left:844.4px;top:721.6px" width="5.6" height="3.4" viewBox="0 0 5.6 3.4"><path d="M0 0 H5.6 L2.8 3.4Z" fill="#333"/></svg>
<span class="t" style="right:962.6px;top:694px;font-size:14px;font-weight:bold;color:#353535;display:inline-block;transform:scaleX(0.9125);transform-origin:right center;line-height:20px">PSR SMP</span>
<span class="t" style="right:962.6px;top:714px;font-size:14px;font-weight:bold;color:#353535;letter-spacing:-0.093px;margin-right:0.093px;line-height:20px">Fold Over 0</span>
<svg class="abs" style="left:966.4px;top:721.6px" width="5.6" height="3.4" viewBox="0 0 5.6 3.4"><path d="M0 0 H5.6 L2.8 3.4Z" fill="#333"/></svg>
<span class="t" style="right:868.5999999999999px;top:694px;font-size:14px;font-weight:bold;color:#353535;display:inline-block;transform:scaleX(0.8337);transform-origin:right center;line-height:20px">SEC</span>
<span class="t" style="right:868.5999999999999px;top:714px;font-size:14px;font-weight:bold;color:#353535;display:inline-block;transform:scaleX(1.0433);transform-origin:right center;line-height:20px">HMW</span>
<svg class="abs" style="left:1060.4px;top:721.6px" width="5.6" height="3.4" viewBox="0 0 5.6 3.4"><path d="M0 0 H5.6 L2.8 3.4Z" fill="#333"/></svg>
<span class="t" style="right:775.8999999999999px;top:694px;font-size:14px;font-weight:bold;color:#353535;display:inline-block;transform:scaleX(0.8337);transform-origin:right center;line-height:20px">SEC</span>
<span class="t" style="right:775.8999999999999px;top:714px;font-size:14px;font-weight:bold;color:#353535;letter-spacing:0.045px;margin-right:-0.045px;line-height:20px">Main %</span>
<svg class="abs" style="left:1153.1px;top:721.6px" width="5.6" height="3.4" viewBox="0 0 5.6 3.4"><path d="M0 0 H5.6 L2.8 3.4Z" fill="#333"/></svg>
<span class="t" style="right:678.5999999999999px;top:694px;font-size:14px;font-weight:bold;color:#353535;display:inline-block;transform:scaleX(0.8668);transform-origin:right center;line-height:20px">SEC RT</span>
<span class="t" style="right:678.5999999999999px;top:714px;font-size:14px;font-weight:bold;color:#353535;letter-spacing:0.157px;margin-right:-0.157px;line-height:20px">(min)</span>
<svg class="abs" style="left:1250.4px;top:721.6px" width="5.6" height="3.4" viewBox="0 0 5.6 3.4"><path d="M0 0 H5.6 L2.8 3.4Z" fill="#333"/></svg>
<span class="t" style="right:591.3999999999999px;top:694px;font-size:14px;font-weight:bold;color:#353535;letter-spacing:0.183px;margin-right:-0.183px;line-height:20px">Titer</span>
<span class="t" style="right:591.3999999999999px;top:714px;font-size:14px;font-weight:bold;color:#353535;letter-spacing:-0.289px;margin-right:0.289px;line-height:20px">Mg L</span>
<svg class="abs" style="left:1337.6px;top:721.6px" width="5.6" height="3.4" viewBox="0 0 5.6 3.4"><path d="M0 0 H5.6 L2.8 3.4Z" fill="#333"/></svg>
<div class="abs" style="left:272.2px;top:742.0px;width:109.8px;height:37px;background:#ffffff;box-shadow:inset 0 -1px 0 #ececec"><span class="t" style="right:8.4px;top:9.6px;font-size:14.5px;letter-spacing:-0.15px;margin-right:-0.15px;color:#222;line-height:16px">1</span></div>
<div class="abs" style="left:382px;top:742.0px;width:48.2px;height:37px;background:#ffffff;box-shadow:inset 0 -1px 0 #ececec"><span class="t" style="right:8.4px;top:9.6px;font-size:14.5px;letter-spacing:-0.15px;margin-right:-0.15px;color:#222;line-height:16px">1</span></div>
<div class="abs" style="left:430.2px;top:742.0px;width:115.0px;height:37px;background:#ffffff;box-shadow:inset 0 -1px 0 #ececec"><span class="t" style="right:8.4px;top:9.6px;font-size:14.5px;letter-spacing:-0.15px;margin-right:-0.15px;color:#222;line-height:16px">2.56e-9</span></div>
<div class="abs" style="left:545.2px;top:742.0px;width:117.8px;height:37px;background:#abe8c8;box-shadow:inset 0 -1px 0 rgba(255,255,255,.22)"><span class="t" style="right:8.4px;top:9.6px;font-size:14.5px;letter-spacing:-0.15px;margin-right:-0.15px;color:#222;line-height:16px">99.1</span></div>
<div class="abs" style="left:663px;top:742.0px;width:97.2px;height:37px;background:#ea4a53;box-shadow:inset 0 -1px 0 rgba(255,255,255,.22)"><span class="t" style="right:8.4px;top:9.6px;font-size:14.5px;letter-spacing:-0.15px;margin-right:-0.15px;color:#222;line-height:16px">35.5</span></div>
<div class="abs" style="left:760.2px;top:742.0px;width:103.8px;height:37px;background:#abe8c8;box-shadow:inset 0 -1px 0 rgba(255,255,255,.22)"><span class="t" style="right:8.4px;top:9.6px;font-size:14.5px;letter-spacing:-0.15px;margin-right:-0.15px;color:#222;line-height:16px">59.3</span></div>
<div class="abs" style="left:864px;top:742.0px;width:122.0px;height:37px;background:#f9c05a;box-shadow:inset 0 -1px 0 rgba(255,255,255,.22)"><span class="t" style="right:8.4px;top:9.6px;font-size:14.5px;letter-spacing:-0.15px;margin-right:-0.15px;color:#222;line-height:16px">0.7</span></div>
<div class="abs" style="left:986px;top:742.0px;width:94.0px;height:37px;background:#abe8c8;box-shadow:inset 0 -1px 0 rgba(255,255,255,.22)"><span class="t" style="right:8.4px;top:9.6px;font-size:14.5px;letter-spacing:-0.15px;margin-right:-0.15px;color:#222;line-height:16px">0.3</span></div>
<div class="abs" style="left:1080px;top:742.0px;width:92.7px;height:37px;background:#ea4a53;box-shadow:inset 0 -1px 0 rgba(255,255,255,.22)"><span class="t" style="right:8.4px;top:9.6px;font-size:14.5px;letter-spacing:-0.15px;margin-right:-0.15px;color:#222;line-height:16px">96.3</span></div>
<div class="abs" style="left:1172.7px;top:742.0px;width:97.3px;height:37px;background:#abe8c8;box-shadow:inset 0 -1px 0 rgba(255,255,255,.22)"><span class="t" style="right:8.4px;top:9.6px;font-size:14.5px;letter-spacing:-0.15px;margin-right:-0.15px;color:#222;line-height:16px">2.5</span></div>
<div class="abs" style="left:1270px;top:742.0px;width:87.2px;height:37px;background:#abe8c8;box-shadow:inset 0 -1px 0 rgba(255,255,255,.22)"><span class="t" style="right:8.4px;top:9.6px;font-size:14.5px;letter-spacing:-0.15px;margin-right:-0.15px;color:#222;line-height:16px">193.0</span></div>
<div class="abs" style="left:272.2px;top:779.0px;width:109.8px;height:37px;background:#ffffff;box-shadow:inset 0 -1px 0 #ececec"><span class="t" style="right:8.4px;top:9.6px;font-size:14.5px;letter-spacing:-0.15px;margin-right:-0.15px;color:#222;line-height:16px">2</span></div>
<div class="abs" style="left:382px;top:779.0px;width:48.2px;height:37px;background:#ffffff;box-shadow:inset 0 -1px 0 #ececec"><span class="t" style="right:8.4px;top:9.6px;font-size:14.5px;letter-spacing:-0.15px;margin-right:-0.15px;color:#222;line-height:16px">5</span></div>
<div class="abs" style="left:430.2px;top:779.0px;width:115.0px;height:37px;background:#ea4a53;box-shadow:inset 0 -1px 0 rgba(255,255,255,.22)"><span class="t" style="right:8.4px;top:9.6px;font-size:14.5px;letter-spacing:-0.15px;margin-right:-0.15px;color:#222;line-height:16px">1.55e-8</span></div>
<div class="abs" style="left:545.2px;top:779.0px;width:117.8px;height:37px;background:#abe8c8;box-shadow:inset 0 -1px 0 rgba(255,255,255,.22)"><span class="t" style="right:8.4px;top:9.6px;font-size:14.5px;letter-spacing:-0.15px;margin-right:-0.15px;color:#222;line-height:16px">97.1</span></div>
<div class="abs" style="left:663px;top:779.0px;width:97.2px;height:37px;background:#ea4a53;box-shadow:inset 0 -1px 0 rgba(255,255,255,.22)"><span class="t" style="right:8.4px;top:9.6px;font-size:14.5px;letter-spacing:-0.15px;margin-right:-0.15px;color:#222;line-height:16px">30.7</span></div>
<div class="abs" style="left:760.2px;top:779.0px;width:103.8px;height:37px;background:#f9c05a;box-shadow:inset 0 -1px 0 rgba(255,255,255,.22)"><span class="t" style="right:8.4px;top:9.6px;font-size:14.5px;letter-spacing:-0.15px;margin-right:-0.15px;color:#222;line-height:16px">57.3</span></div>
<div class="abs" style="left:864px;top:779.0px;width:122.0px;height:37px;background:#abe8c8;box-shadow:inset 0 -1px 0 rgba(255,255,255,.22)"><span class="t" style="right:8.4px;top:9.6px;font-size:14.5px;letter-spacing:-0.15px;margin-right:-0.15px;color:#222;line-height:16px">2.1</span></div>
<div class="abs" style="left:986px;top:779.0px;width:94.0px;height:37px;background:#abe8c8;box-shadow:inset 0 -1px 0 rgba(255,255,255,.22)"><span class="t" style="right:8.4px;top:9.6px;font-size:14.5px;letter-spacing:-0.15px;margin-right:-0.15px;color:#222;line-height:16px">2.6</span></div>
<div class="abs" style="left:1080px;top:779.0px;width:92.7px;height:37px;background:#ea4a53;box-shadow:inset 0 -1px 0 rgba(255,255,255,.22)"><span class="t" style="right:8.4px;top:9.6px;font-size:14.5px;letter-spacing:-0.15px;margin-right:-0.15px;color:#222;line-height:16px">93.5</span></div>
<div class="abs" style="left:1172.7px;top:779.0px;width:97.3px;height:37px;background:#abe8c8;box-shadow:inset 0 -1px 0 rgba(255,255,255,.22)"><span class="t" style="right:8.4px;top:9.6px;font-size:14.5px;letter-spacing:-0.15px;margin-right:-0.15px;color:#222;line-height:16px">2.4</span></div>
<div class="abs" style="left:1270px;top:779.0px;width:87.2px;height:37px;background:#abe8c8;box-shadow:inset 0 -1px 0 rgba(255,255,255,.22)"><span class="t" style="right:8.4px;top:9.6px;font-size:14.5px;letter-spacing:-0.15px;margin-right:-0.15px;color:#222;line-height:16px">149.4</span></div>
<div class="abs" style="left:272.2px;top:816.0px;width:109.8px;height:38px;background:#ffffff;box-shadow:inset 0 -1px 0 #ececec"><span class="t" style="right:8.4px;top:10.1px;font-size:14.5px;letter-spacing:-0.15px;margin-right:-0.15px;color:#222;line-height:16px">3</span></div>
<div class="abs" style="left:382px;top:816.0px;width:48.2px;height:38px;background:#ffffff;box-shadow:inset 0 -1px 0 #ececec"><span class="t" style="right:8.4px;top:10.1px;font-size:14.5px;letter-spacing:-0.15px;margin-right:-0.15px;color:#222;line-height:16px">2</span></div>
<div class="abs" style="left:430.2px;top:816.0px;width:115.0px;height:38px;background:#ffffff;box-shadow:inset 0 -1px 0 #ececec"><span class="t" style="right:8.4px;top:10.1px;font-size:14.5px;letter-spacing:-0.15px;margin-right:-0.15px;color:#222;line-height:16px">2.80e-9</span></div>
<div class="abs" style="left:545.2px;top:816.0px;width:117.8px;height:38px;background:#ea4a53;box-shadow:inset 0 -1px 0 rgba(255,255,255,.22)"><span class="t" style="right:8.4px;top:10.1px;font-size:14.5px;letter-spacing:-0.15px;margin-right:-0.15px;color:#222;line-height:16px">52.5</span></div>
<div class="abs" style="left:663px;top:816.0px;width:97.2px;height:38px;background:#abe8c8;box-shadow:inset 0 -1px 0 rgba(255,255,255,.22)"><span class="t" style="right:8.4px;top:10.1px;font-size:14.5px;letter-spacing:-0.15px;margin-right:-0.15px;color:#222;line-height:16px">25.0</span></div>
<div class="abs" style="left:760.2px;top:816.0px;width:103.8px;height:38px;background:#f9c05a;box-shadow:inset 0 -1px 0 rgba(255,255,255,.22)"><span class="t" style="right:8.4px;top:10.1px;font-size:14.5px;letter-spacing:-0.15px;margin-right:-0.15px;color:#222;line-height:16px">57.3</span></div>
<div class="abs" style="left:864px;top:816.0px;width:122.0px;height:38px;background:#abe8c8;box-shadow:inset 0 -1px 0 rgba(255,255,255,.22)"><span class="t" style="right:8.4px;top:10.1px;font-size:14.5px;letter-spacing:-0.15px;margin-right:-0.15px;color:#222;line-height:16px">1.1</span></div>
<div class="abs" style="left:986px;top:816.0px;width:94.0px;height:38px;background:#ea4a53;box-shadow:inset 0 -1px 0 rgba(255,255,255,.22)"><span class="t" style="right:8.4px;top:10.1px;font-size:14.5px;letter-spacing:-0.15px;margin-right:-0.15px;color:#222;line-height:16px">16.6</span></div>
<div class="abs" style="left:1080px;top:816.0px;width:92.7px;height:38px;background:#ea4a53;box-shadow:inset 0 -1px 0 rgba(255,255,255,.22)"><span class="t" style="right:8.4px;top:10.1px;font-size:14.5px;letter-spacing:-0.15px;margin-right:-0.15px;color:#222;line-height:16px">79.1</span></div>
<div class="abs" style="left:1172.7px;top:816.0px;width:97.3px;height:38px;background:#abe8c8;box-shadow:inset 0 -1px 0 rgba(255,255,255,.22)"><span class="t" style="right:8.4px;top:10.1px;font-size:14.5px;letter-spacing:-0.15px;margin-right:-0.15px;color:#222;line-height:16px">2.4</span></div>
<div class="abs" style="left:1270px;top:816.0px;width:87.2px;height:38px;background:#f9c05a;box-shadow:inset 0 -1px 0 rgba(255,255,255,.22)"><span class="t" style="right:8.4px;top:10.1px;font-size:14.5px;letter-spacing:-0.15px;margin-right:-0.15px;color:#222;line-height:16px">81.5</span></div>
<div class="abs" style="left:272.2px;top:854.0px;width:109.8px;height:37px;background:#ffffff;box-shadow:inset 0 -1px 0 #ececec"><span class="t" style="right:8.4px;top:9.6px;font-size:14.5px;letter-spacing:-0.15px;margin-right:-0.15px;color:#222;line-height:16px">4</span></div>
<div class="abs" style="left:382px;top:854.0px;width:48.2px;height:37px;background:#ffffff;box-shadow:inset 0 -1px 0 #ececec"><span class="t" style="right:8.4px;top:9.6px;font-size:14.5px;letter-spacing:-0.15px;margin-right:-0.15px;color:#222;line-height:16px">22</span></div>
<div class="abs" style="left:430.2px;top:854.0px;width:115.0px;height:37px;background:#ffffff;box-shadow:inset 0 -1px 0 #ececec"><span class="t" style="right:8.4px;top:9.6px;font-size:14.5px;letter-spacing:-0.15px;margin-right:-0.15px;color:#222;line-height:16px">6.63e-9</span></div>
<div class="abs" style="left:545.2px;top:854.0px;width:117.8px;height:37px;background:#abe8c8;box-shadow:inset 0 -1px 0 rgba(255,255,255,.22)"><span class="t" style="right:8.4px;top:9.6px;font-size:14.5px;letter-spacing:-0.15px;margin-right:-0.15px;color:#222;line-height:16px">97.6</span></div>
<div class="abs" style="left:663px;top:854.0px;width:97.2px;height:37px;background:#f9c05a;box-shadow:inset 0 -1px 0 rgba(255,255,255,.22)"><span class="t" style="right:8.4px;top:9.6px;font-size:14.5px;letter-spacing:-0.15px;margin-right:-0.15px;color:#222;line-height:16px">28.8</span></div>
<div class="abs" style="left:760.2px;top:854.0px;width:103.8px;height:37px;background:#f9c05a;box-shadow:inset 0 -1px 0 rgba(255,255,255,.22)"><span class="t" style="right:8.4px;top:9.6px;font-size:14.5px;letter-spacing:-0.15px;margin-right:-0.15px;color:#222;line-height:16px">58.7</span></div>
<div class="abs" style="left:864px;top:854.0px;width:122.0px;height:37px;background:#abe8c8;box-shadow:inset 0 -1px 0 rgba(255,255,255,.22)"><span class="t" style="right:8.4px;top:9.6px;font-size:14.5px;letter-spacing:-0.15px;margin-right:-0.15px;color:#222;line-height:16px">1.1</span></div>
<div class="abs" style="left:986px;top:854.0px;width:94.0px;height:37px;background:#abe8c8;box-shadow:inset 0 -1px 0 rgba(255,255,255,.22)"><span class="t" style="right:8.4px;top:9.6px;font-size:14.5px;letter-spacing:-0.15px;margin-right:-0.15px;color:#222;line-height:16px">3.0</span></div>
<div class="abs" style="left:1080px;top:854.0px;width:92.7px;height:37px;background:#ea4a53;box-shadow:inset 0 -1px 0 rgba(255,255,255,.22)"><span class="t" style="right:8.4px;top:9.6px;font-size:14.5px;letter-spacing:-0.15px;margin-right:-0.15px;color:#222;line-height:16px">93.9</span></div>
<div class="abs" style="left:1172.7px;top:854.0px;width:97.3px;height:37px;background:#abe8c8;box-shadow:inset 0 -1px 0 rgba(255,255,255,.22)"><span class="t" style="right:8.4px;top:9.6px;font-size:14.5px;letter-spacing:-0.15px;margin-right:-0.15px;color:#222;line-height:16px">2.4</span></div>
<div class="abs" style="left:1270px;top:854.0px;width:87.2px;height:37px;background:#f9c05a;box-shadow:inset 0 -1px 0 rgba(255,255,255,.22)"><span class="t" style="right:8.4px;top:9.6px;font-size:14.5px;letter-spacing:-0.15px;margin-right:-0.15px;color:#222;line-height:16px">96.4</span></div>
<div class="abs" style="left:272.2px;top:891.0px;width:109.8px;height:37px;background:#ffffff;box-shadow:inset 0 -1px 0 #ececec"><span class="t" style="right:8.4px;top:9.6px;font-size:14.5px;letter-spacing:-0.15px;margin-right:-0.15px;color:#222;line-height:16px">5</span></div>
<div class="abs" style="left:382px;top:891.0px;width:48.2px;height:37px;background:#ffffff;box-shadow:inset 0 -1px 0 #ececec"><span class="t" style="right:8.4px;top:9.6px;font-size:14.5px;letter-spacing:-0.15px;margin-right:-0.15px;color:#222;line-height:16px">13</span></div>
<div class="abs" style="left:430.2px;top:891.0px;width:115.0px;height:37px;background:#ffffff;box-shadow:inset 0 -1px 0 #ececec"><span class="t" style="right:8.4px;top:9.6px;font-size:14.5px;letter-spacing:-0.15px;margin-right:-0.15px;color:#222;line-height:16px">8.34e-9</span></div>
<div class="abs" style="left:545.2px;top:891.0px;width:117.8px;height:37px;background:#abe8c8;box-shadow:inset 0 -1px 0 rgba(255,255,255,.22)"><span class="t" style="right:8.4px;top:9.6px;font-size:14.5px;letter-spacing:-0.15px;margin-right:-0.15px;color:#222;line-height:16px">96.4</span></div>
<div class="abs" style="left:663px;top:891.0px;width:97.2px;height:37px;background:#f9c05a;box-shadow:inset 0 -1px 0 rgba(255,255,255,.22)"><span class="t" style="right:8.4px;top:9.6px;font-size:14.5px;letter-spacing:-0.15px;margin-right:-0.15px;color:#222;line-height:16px">27.6</span></div>
<div class="abs" style="left:760.2px;top:891.0px;width:103.8px;height:37px;background:#f9c05a;box-shadow:inset 0 -1px 0 rgba(255,255,255,.22)"><span class="t" style="right:8.4px;top:9.6px;font-size:14.5px;letter-spacing:-0.15px;margin-right:-0.15px;color:#222;line-height:16px">58.1</span></div>
<div class="abs" style="left:864px;top:891.0px;width:122.0px;height:37px;background:#f9c05a;box-shadow:inset 0 -1px 0 rgba(255,255,255,.22)"><span class="t" style="right:8.4px;top:9.6px;font-size:14.5px;letter-spacing:-0.15px;margin-right:-0.15px;color:#222;line-height:16px">0.8</span></div>
<div class="abs" style="left:986px;top:891.0px;width:94.0px;height:37px;background:#abe8c8;box-shadow:inset 0 -1px 0 rgba(255,255,255,.22)"><span class="t" style="right:8.4px;top:9.6px;font-size:14.5px;letter-spacing:-0.15px;margin-right:-0.15px;color:#222;line-height:16px">3.4</span></div>
<div class="abs" style="left:1080px;top:891.0px;width:92.7px;height:37px;background:#ea4a53;box-shadow:inset 0 -1px 0 rgba(255,255,255,.22)"><span class="t" style="right:8.4px;top:9.6px;font-size:14.5px;letter-spacing:-0.15px;margin-right:-0.15px;color:#222;line-height:16px">93.5</span></div>
<div class="abs" style="left:1172.7px;top:891.0px;width:97.3px;height:37px;background:#abe8c8;box-shadow:inset 0 -1px 0 rgba(255,255,255,.22)"><span class="t" style="right:8.4px;top:9.6px;font-size:14.5px;letter-spacing:-0.15px;margin-right:-0.15px;color:#222;line-height:16px">2.4</span></div>
<div class="abs" style="left:1270px;top:891.0px;width:87.2px;height:37px;background:#f9c05a;box-shadow:inset 0 -1px 0 rgba(255,255,255,.22)"><span class="t" style="right:8.4px;top:9.6px;font-size:14.5px;letter-spacing:-0.15px;margin-right:-0.15px;color:#222;line-height:16px">42.0</span></div>
<div class="abs" style="left:272.2px;top:928.0px;width:109.8px;height:37px;background:#ffffff;box-shadow:inset 0 -1px 0 #ececec"><span class="t" style="right:8.4px;top:9.6px;font-size:14.5px;letter-spacing:-0.15px;margin-right:-0.15px;color:#222;line-height:16px">6</span></div>
<div class="abs" style="left:382px;top:928.0px;width:48.2px;height:37px;background:#ffffff;box-shadow:inset 0 -1px 0 #ececec"><span class="t" style="right:8.4px;top:9.6px;font-size:14.5px;letter-spacing:-0.15px;margin-right:-0.15px;color:#222;line-height:16px">3</span></div>
<div class="abs" style="left:430.2px;top:928.0px;width:115.0px;height:37px;background:#ffffff;box-shadow:inset 0 -1px 0 #ececec"><span class="t" style="right:8.4px;top:9.6px;font-size:14.5px;letter-spacing:-0.15px;margin-right:-0.15px;color:#222;line-height:16px">2.03e-9</span></div>
<div class="abs" style="left:545.2px;top:928.0px;width:117.8px;height:37px;background:#ea4a53;box-shadow:inset 0 -1px 0 rgba(255,255,255,.22)"><span class="t" style="right:8.4px;top:9.6px;font-size:14.5px;letter-spacing:-0.15px;margin-right:-0.15px;color:#222;line-height:16px">60.5</span></div>
<div class="abs" style="left:663px;top:928.0px;width:97.2px;height:37px;background:#f9c05a;box-shadow:inset 0 -1px 0 rgba(255,255,255,.22)"><span class="t" style="right:8.4px;top:9.6px;font-size:14.5px;letter-spacing:-0.15px;margin-right:-0.15px;color:#222;line-height:16px">25.4</span></div>
<div class="abs" style="left:760.2px;top:928.0px;width:103.8px;height:37px;background:#f9c05a;box-shadow:inset 0 -1px 0 rgba(255,255,255,.22)"><span class="t" style="right:8.4px;top:9.6px;font-size:14.5px;letter-spacing:-0.15px;margin-right:-0.15px;color:#222;line-height:16px">58.2</span></div>
<div class="abs" style="left:864px;top:928.0px;width:122.0px;height:37px;background:#f9c05a;box-shadow:inset 0 -1px 0 rgba(255,255,255,.22)"><span class="t" style="right:8.4px;top:9.6px;font-size:14.5px;letter-spacing:-0.15px;margin-right:-0.15px;color:#222;line-height:16px">0.9</span></div>
<div class="abs" style="left:986px;top:928.0px;width:94.0px;height:37px;background:#ea4a53;box-shadow:inset 0 -1px 0 rgba(255,255,255,.22)"><span class="t" style="right:8.4px;top:9.6px;font-size:14.5px;letter-spacing:-0.15px;margin-right:-0.15px;color:#222;line-height:16px">71.1</span></div>
<div class="abs" style="left:1080px;top:928.0px;width:92.7px;height:37px;background:#abe8c8;box-shadow:inset 0 -1px 0 rgba(255,255,255,.22)"><span class="t" style="right:8.4px;top:9.6px;font-size:14.5px;letter-spacing:-0.15px;margin-right:-0.15px;color:#222;line-height:16px">27.5</span></div>
<div class="abs" style="left:1172.7px;top:928.0px;width:97.3px;height:37px;background:#abe8c8;box-shadow:inset 0 -1px 0 rgba(255,255,255,.22)"><span class="t" style="right:8.4px;top:9.6px;font-size:14.5px;letter-spacing:-0.15px;margin-right:-0.15px;color:#222;line-height:16px">2.4</span></div>
<div class="abs" style="left:1270px;top:928.0px;width:87.2px;height:37px;background:#f9c05a;box-shadow:inset 0 -1px 0 rgba(255,255,255,.22)"><span class="t" style="right:8.4px;top:9.6px;font-size:14.5px;letter-spacing:-0.15px;margin-right:-0.15px;color:#222;line-height:16px">33.3</span></div>
<div class="card" style="left:1424px;top:622px;width:465px;height:360px"></div>
<span class="t" style="left:1442px;top:643.6px;font-size:24px;color:#262626;display:inline-block;transform:scaleX(0.8774);transform-origin:left center;line-height:30px">PCA</span>
<svg class="abs" style="left:1424px;top:622px" width="465" height="346" viewBox="1424 622 465 346">
<text x="1486" y="704.6" font-size="14" fill="#4a4a4a" stroke="#4a4a4a" stroke-width="0.45" letter-spacing="0.584">Cluster Number</text>
<circle cx="1606" cy="699.8" r="6" fill="#2f8fe8"/><text x="1618.2" y="704.3" font-size="12.5" fill="#555">1</text>
<circle cx="1646" cy="699.8" r="6" fill="#fbb93a"/><text x="1658.2" y="704.3" font-size="12.5" fill="#555">2</text>
<circle cx="1686" cy="699.8" r="6" fill="#ee3f4a"/><text x="1698.2" y="704.3" font-size="12.5" fill="#555">3</text>
<circle cx="1726" cy="699.8" r="6" fill="#63cdbf"/><text x="1738.2" y="704.3" font-size="12.5" fill="#555">4</text>
<circle cx="1766" cy="699.8" r="6" fill="#19b86c"/><text x="1778.2" y="704.3" font-size="12.5" fill="#555">5</text>
<circle cx="1806" cy="699.8" r="6" fill="#f97c3f"/><text x="1818.2" y="704.3" font-size="12.5" fill="#555">6</text>
<path d="M1463.5 740.3 H1865.6" stroke="#dcdcdc" stroke-width="1"/><text x="1451.8" y="744.9" font-size="12.5" fill="#555" text-anchor="end">4</text>
<path d="M1463.5 799.3 H1865.6" stroke="#dcdcdc" stroke-width="1"/><text x="1451.8" y="803.9" font-size="12.5" fill="#555" text-anchor="end">2</text>
<path d="M1463.5 858 H1865.6" stroke="#dcdcdc" stroke-width="1"/><text x="1451.8" y="862.6" font-size="12.5" fill="#555" text-anchor="end">0</text>
<path d="M1463.5 916.6 H1865.6" stroke="#dcdcdc" stroke-width="1"/><text x="1451.8" y="921.2" font-size="12.5" fill="#555" text-anchor="end">-2</text>
<path d="M1550.7 740.3 V968" stroke="#dcdcdc" stroke-width="1"/>
<path d="M1649.5 740.3 V968" stroke="#dcdcdc" stroke-width="1"/>
<path d="M1749.6 740.3 V968" stroke="#dcdcdc" stroke-width="1"/>
<path d="M1848.6 740.3 V968" stroke="#dcdcdc" stroke-width="1"/>
<circle cx="1834.1" cy="852.7" r="6" fill="#2f8fe8" fill-opacity="0.72"/>
<circle cx="1822.8" cy="753.8" r="6" fill="#63cdbf" fill-opacity="0.72"/>
<circle cx="1857" cy="768.8" r="6" fill="#63cdbf" fill-opacity="0.72"/>
<circle cx="1864.9" cy="769.8" r="6" fill="#63cdbf" fill-opacity="0.72"/>
<circle cx="1768.7" cy="840.9" r="6" fill="#63cdbf" fill-opacity="0.72"/>
<circle cx="1768.5" cy="851.7" r="6" fill="#63cdbf" fill-opacity="0.72"/>
<circle cx="1753.7" cy="848" r="6" fill="#63cdbf" fill-opacity="0.72"/>
<circle cx="1752.8" cy="855.4" r="6" fill="#63cdbf" fill-opacity="0.72"/>
<circle cx="1761" cy="851.7" r="6" fill="#63cdbf" fill-opacity="0.72"/>
<circle cx="1782.8" cy="856.6" r="6" fill="#63cdbf" fill-opacity="0.72"/>
<circle cx="1785.7" cy="862.7" r="6" fill="#63cdbf" fill-opacity="0.72"/>
<circle cx="1792.3" cy="861.5" r="6" fill="#63cdbf" fill-opacity="0.72"/>
<circle cx="1799.2" cy="865.7" r="6" fill="#63cdbf" fill-opacity="0.72"/>
<circle cx="1774.6" cy="865.7" r="6" fill="#63cdbf" fill-opacity="0.72"/>
<circle cx="1734.8" cy="879.7" r="6" fill="#63cdbf" fill-opacity="0.72"/>
<circle cx="1762.3" cy="900.8" r="6" fill="#63cdbf" fill-opacity="0.72"/>
<circle cx="1782.8" cy="905.8" r="6" fill="#63cdbf" fill-opacity="0.72"/>
<circle cx="1849.1" cy="956.6" r="6" fill="#63cdbf" fill-opacity="0.72"/>
<circle cx="1757" cy="846" r="6" fill="#63cdbf" fill-opacity="0.72"/>
<circle cx="1760" cy="853" r="6" fill="#63cdbf" fill-opacity="0.72"/>
<circle cx="1750" cy="851" r="6" fill="#63cdbf" fill-opacity="0.72"/>
<circle cx="1744" cy="852" r="6" fill="#63cdbf" fill-opacity="0.72"/>
<circle cx="1762" cy="845" r="6" fill="#63cdbf" fill-opacity="0.72"/>
<circle cx="1772.7" cy="861.5" r="6" fill="#fbb93a" fill-opacity="0.72"/>
<circle cx="1814" cy="864" r="6" fill="#fbb93a" fill-opacity="0.72"/>
<circle cx="1829" cy="928.6" r="6" fill="#fbb93a" fill-opacity="0.72"/>
<circle cx="1850.8" cy="931.6" r="6" fill="#fbb93a" fill-opacity="0.72"/>
<circle cx="1640.8" cy="843.7" r="6" fill="#ee3f4a" fill-opacity="0.72"/>
<circle cx="1623.7" cy="880" r="6" fill="#ee3f4a" fill-opacity="0.72"/>
<circle cx="1801.9" cy="752.1" r="6" fill="#19b86c" fill-opacity="0.72"/>
<circle cx="1707" cy="869.6" r="6" fill="#19b86c" fill-opacity="0.72"/>
<circle cx="1728.7" cy="856.8" r="6" fill="#19b86c" fill-opacity="0.72"/>
<circle cx="1739.7" cy="855.9" r="6" fill="#19b86c" fill-opacity="0.72"/>
<circle cx="1741.5" cy="846.3" r="6" fill="#19b86c" fill-opacity="0.72"/>
<circle cx="1747.6" cy="849.7" r="6" fill="#19b86c" fill-opacity="0.72"/>
<circle cx="1745.9" cy="860.8" r="6" fill="#19b86c" fill-opacity="0.72"/>
<circle cx="1756.7" cy="838.7" r="6" fill="#19b86c" fill-opacity="0.72"/>
<circle cx="1758.2" cy="849.2" r="6" fill="#19b86c" fill-opacity="0.72"/>
<circle cx="1763.6" cy="867.7" r="6" fill="#19b86c" fill-opacity="0.72"/>
<circle cx="1766" cy="870.6" r="6" fill="#19b86c" fill-opacity="0.72"/>
<circle cx="1757.7" cy="897.7" r="6" fill="#19b86c" fill-opacity="0.72"/>
<circle cx="1717.9" cy="917.8" r="6" fill="#19b86c" fill-opacity="0.72"/>
<circle cx="1462.9" cy="841.1" r="6" fill="#f97c3f" fill-opacity="0.72"/>
<circle cx="1465.1" cy="842.6" r="6" fill="#f97c3f" fill-opacity="0.72"/>
<circle cx="1471" cy="850.8" r="6" fill="#f97c3f" fill-opacity="0.72"/>
</svg>
<svg class="abs" style="left:1908px;top:956px" width="12" height="12" viewBox="0 0 12 12"><path d="M12 0 V12 H0 A12 12 0 0 0 12 0Z" fill="#4a2226"/></svg>
</body></html>
